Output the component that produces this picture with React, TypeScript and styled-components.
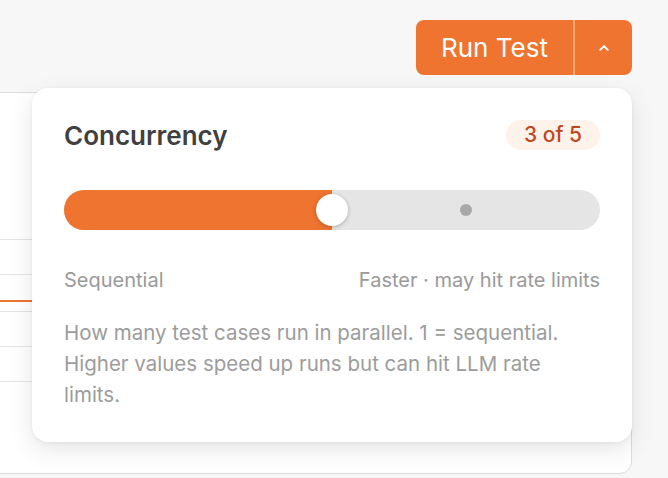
import React from "react";
import styled, { createGlobalStyle } from "styled-components";

const ORANGE = "#ee7430";

const GlobalStyle = createGlobalStyle`
  html, body {
    margin: 0;
    padding: 0;
    background: #f7f7f7;
    font-family: Inter, "Noto Sans", sans-serif;
    -webkit-font-smoothing: antialiased;
  }
  #root {
    width: 668px;
    height: 478px;
    overflow: hidden;
  }
`;

const Page = styled.div`
  display: flex;
  flex-direction: column;
  align-items: flex-end;
  padding: 20px 36px 0 0;
  height: 478px;
  box-sizing: border-box;
`;

const ActionArea = styled.div`
  position: relative;
  z-index: 2;
`;

const SplitButton = styled.div`
  display: flex;
  height: 55px;
  border-radius: 8px;
  background: ${ORANGE};
  overflow: hidden;
`;

const MainButton = styled.button`
  border: 0;
  background: transparent;
  color: #fff;
  font-family: inherit;
  font-size: 26px;
  font-weight: 400;
  padding: 0 25px;
  width: 157px;
  text-align: left;
  white-space: nowrap;
  cursor: pointer;
`;

const Divider = styled.div`
  width: 2px;
  background: #f6a578;
`;

const ToggleButton = styled.button`
  border: 0;
  background: transparent;
  width: 57px;
  display: flex;
  align-items: center;
  justify-content: center;
  color: #fff;
  cursor: pointer;
`;

const Popover = styled.div`
  position: absolute;
  top: 68px;
  right: 0;
  width: 600px;
  box-sizing: border-box;
  padding: 30px 32px 32px;
  background: #fff;
  border-radius: 16px;
  box-shadow: 0 8px 24px rgba(0, 0, 0, 0.1), 0 1px 4px rgba(0, 0, 0, 0.06);
`;

const HeaderRow = styled.div`
  display: flex;
  align-items: center;
  justify-content: space-between;
  height: 34px;
`;

const Title = styled.h3`
  margin: 0;
  font-size: 26px;
  font-weight: 600;
  color: #404040;
`;

const Badge = styled.span`
  background: #fdf3ea;
  color: #c2461c;
  font-size: 21px;
  font-weight: 500;
  padding: 3px 18px;
  border-radius: 999px;
  line-height: 24px;
`;

const Track = styled.div`
  position: relative;
  margin-top: 38px;
  height: 40px;
  border-radius: 20px;
  background: #e5e5e5;
`;

const Fill = styled.div`
  height: 100%;
  border-radius: 20px 0 0 20px;
  background: ${ORANGE};
`;

const Thumb = styled.div`
  position: absolute;
  top: 50%;
  width: 32px;
  height: 32px;
  border-radius: 50%;
  background: #fff;
  transform: translate(-50%, -50%);
  box-shadow: 0 1px 4px rgba(0, 0, 0, 0.25);
`;

const Tick = styled.div`
  position: absolute;
  top: 50%;
  width: 12px;
  height: 12px;
  border-radius: 50%;
  background: #a8a8a8;
  transform: translate(-50%, -50%);
`;

const Legend = styled.div`
  display: flex;
  justify-content: space-between;
  margin-top: 38px;
  font-size: 20px;
  line-height: 24px;
  color: #9a9a9a;
`;

const Description = styled.p`
  margin: 25px 0 0;
  max-width: 500px;
  font-size: 20.5px;
  line-height: 31px;
  color: #9c9c9c;
`;

const Card = styled.div`
  margin-top: 17px;
  align-self: stretch;
  margin-left: -20px;
  height: 380px;
  border: 1px solid #dcdcdc;
  border-radius: 12px;
  background: #fff;
  overflow: hidden;
  display: flex;
  flex-direction: column;
`;

const Row = styled.div<{ $h: number; $accent?: boolean }>`
  height: ${(p) => p.$h}px;
  flex-shrink: 0;
  border-bottom: ${(p) => (p.$accent ? `2px solid ${ORANGE}` : "1px solid #e3e3e3")};
`;

const rows = [
  { h: 146 },
  { h: 34 },
  { h: 25, accent: true },
  { h: 9 },
  { h: 34 },
  { h: 34 },
];

const ChevronUp = () => (
  <svg width="18" height="18" viewBox="0 0 24 24" fill="none" stroke="currentColor" strokeWidth="2.6" strokeLinecap="round" strokeLinejoin="round">
    <path d="M7 14.5l5-5 5 5" />
  </svg>
);

export default function App() {
  const min = 1;
  const max = 5;
  const value = 3;
  const pct = ((value - min) / (max - min)) * 100;
  const nextPct = ((value + 1 - min) / (max - min)) * 100;

  return (
    <>
      <GlobalStyle />
      <Page>
        <ActionArea>
          <SplitButton>
            <MainButton>Run Test</MainButton>
            <Divider />
            <ToggleButton aria-label="Options">
              <ChevronUp />
            </ToggleButton>
          </SplitButton>
          <Popover>
            <HeaderRow>
              <Title>Concurrency</Title>
              <Badge>
                {value} of {max}
              </Badge>
            </HeaderRow>
            <Track>
              <Fill style={{ width: `${pct}%` }} />
              <Tick style={{ left: `${nextPct}%` }} />
              <Thumb style={{ left: `${pct}%` }} />
            </Track>
            <Legend>
              <span>Sequential</span>
              <span>Faster · may hit rate limits</span>
            </Legend>
            <Description>
              How many test cases run in parallel. 1 = sequential. Higher values speed up runs but can hit LLM rate
              limits.
            </Description>
          </Popover>
        </ActionArea>
        <Card>
          {rows.map((r, i) => (
            <Row key={i} $h={r.h} $accent={r.accent} />
          ))}
        </Card>
      </Page>
    </>
  );
}
